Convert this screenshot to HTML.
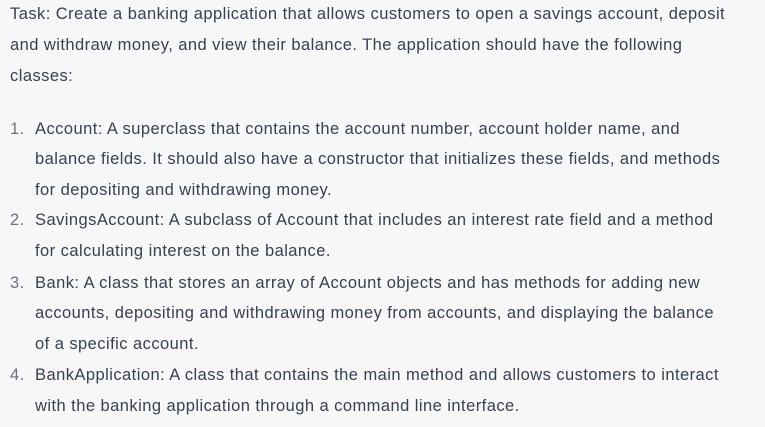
<!DOCTYPE html>
<html><head><style>
html,body{margin:0;padding:0;background:#f7f7f8;width:765px;height:427px;overflow:hidden}
body{font-family:"Liberation Sans",sans-serif;font-size:16.5px;color:#374151;letter-spacing:0.45px}
.l{position:absolute;white-space:nowrap;line-height:20px}
.n{position:absolute;white-space:nowrap;line-height:20px;color:#6b7280}
</style></head><body>
<div class="l" style="left:10px;top:4px">Task: Create a banking application that allows customers to open a savings account, deposit</div>
<div class="l" style="left:10px;top:35px">and withdraw money, and view their balance. The application should have the following</div>
<div class="l" style="left:10px;top:66px">classes:</div>
<div class="n" style="left:10px;top:119px">1.</div>
<div class="l" style="left:35px;top:119px">Account: A superclass that contains the account number, account holder name, and</div>
<div class="l" style="left:35px;top:149px">balance fields. It should also have a constructor that initializes these fields, and methods</div>
<div class="l" style="left:35px;top:180px">for depositing and withdrawing money.</div>
<div class="n" style="left:10px;top:210px">2.</div>
<div class="l" style="left:35px;top:210px">SavingsAccount: A subclass of Account that includes an interest rate field and a method</div>
<div class="l" style="left:35px;top:241px">for calculating interest on the balance.</div>
<div class="n" style="left:10px;top:273px">3.</div>
<div class="l" style="left:35px;top:273px">Bank: A class that stores an array of Account objects and has methods for adding new</div>
<div class="l" style="left:35px;top:303px">accounts, depositing and withdrawing money from accounts, and displaying the balance</div>
<div class="l" style="left:35px;top:334px">of a specific account.</div>
<div class="n" style="left:10px;top:365px">4.</div>
<div class="l" style="left:35px;top:365px">BankApplication: A class that contains the main method and allows customers to interact</div>
<div class="l" style="left:35px;top:396px">with the banking application through a command line interface.</div>
</body></html>
